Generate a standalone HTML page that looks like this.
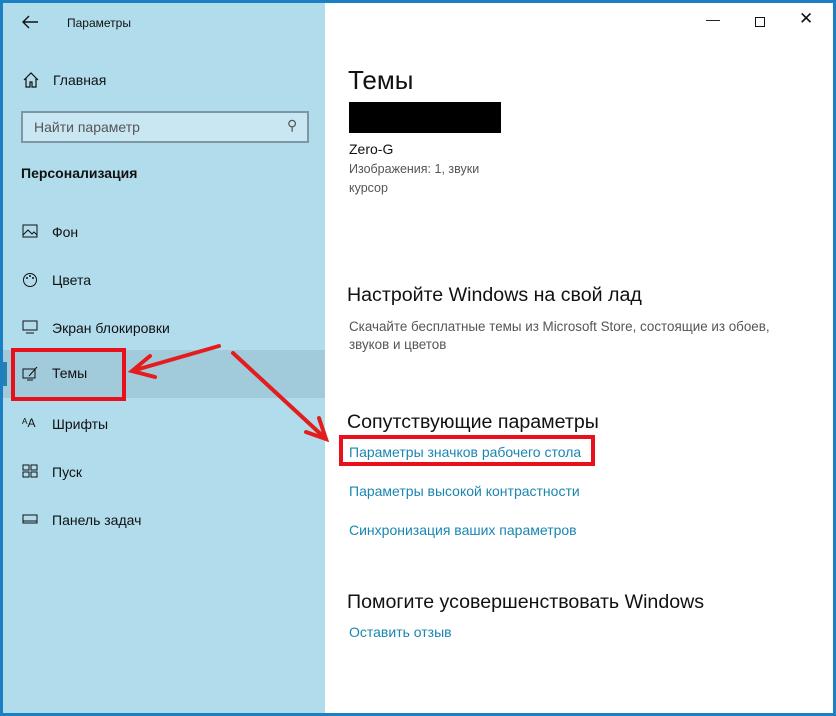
<!DOCTYPE html>
<html><head><meta charset="utf-8"><style>
*{margin:0;padding:0;box-sizing:border-box}
body{width:836px;height:716px;overflow:hidden;background:#1b7fc4;font-family:"Liberation Sans",sans-serif;position:relative}
.win{position:absolute;left:3px;top:3px;width:830px;height:710px;background:#fff}
.side{position:absolute;left:0;top:0;width:322px;height:710px;background:#b1dcec}
.t{position:absolute;white-space:nowrap}
.nav{position:absolute;left:0;width:322px;height:48px;font-size:14px;color:#111}
.nav span{position:absolute;left:49px;top:15px}
.nav svg{position:absolute;left:19px;top:15px}
a{color:#1a86b0;text-decoration:none}
</style></head><body>
<div class="win">
<div class="side">
<svg style="position:absolute;left:19px;top:12px" width="16" height="14"><path d="M7 1L1 7l6 6M1 7h15" stroke="#111" stroke-width="1.4" fill="none"/></svg>
<div class="t" style="left:64px;top:13px;font-size:12px;color:#111">Параметры</div>
<svg style="position:absolute;left:20px;top:69px" width="16" height="16"><path d="M1 8L8 1l7 7M3 6v9h4v-5h2v5h4V6" stroke="#111" stroke-width="1.2" fill="none"/></svg>
<div class="t" style="left:50px;top:69px;font-size:14px;color:#111">Главная</div>
<div style="position:absolute;left:18px;top:108px;width:288px;height:32px;border:2px solid #7d98a4;background:#c9e7f2"></div>
<div class="t" style="left:31px;top:116px;font-size:14px;color:#555">Найти параметр</div>
<div class="t" style="left:284px;top:114px;font-size:14px;color:#555">⚲</div>
<div class="t" style="left:18px;top:162px;font-size:14px;font-weight:bold;color:#111">Персонализация</div>
<div class="nav" style="top:206px"><svg width="16" height="14"><rect x="1" y="1" width="14" height="12" fill="none" stroke="#111"/><path d="M1 11l5-5 4 4 2-2 3 3" stroke="#111" fill="none"/></svg><span>Фон</span></div>
<div class="nav" style="top:254px"><svg width="16" height="16"><circle cx="8" cy="8" r="6.5" fill="none" stroke="#111"/><circle cx="5" cy="6" r="1" fill="#111"/><circle cx="8" cy="4" r="1" fill="#111"/><circle cx="11" cy="6" r="1" fill="#111"/></svg><span>Цвета</span></div>
<div class="nav" style="top:302px"><svg width="16" height="14"><rect x="1" y="1" width="14" height="9" fill="none" stroke="#111"/><path d="M4 13h8" stroke="#111"/></svg><span>Экран блокировки</span></div>
<div class="nav" style="top:347px;background:#a1cbdb"><div style="position:absolute;left:0;top:12px;width:4px;height:24px;background:#2a7fae"></div><svg width="16" height="16"><rect x="1" y="4" width="12" height="9" fill="none" stroke="#111"/><path d="M7 11l8-9M5 15h6" stroke="#111" fill="none"/></svg><span>Темы</span></div>
<div class="nav" style="top:398px"><span style="left:19px;font-size:12px">ᴬA</span><span>Шрифты</span></div>
<div class="nav" style="top:446px"><svg width="16" height="14"><rect x="1" y="1" width="6" height="5" fill="none" stroke="#111"/><rect x="9" y="1" width="6" height="5" fill="none" stroke="#111"/><rect x="1" y="8" width="6" height="5" fill="none" stroke="#111"/><rect x="9" y="8" width="6" height="5" fill="none" stroke="#111"/></svg><span>Пуск</span></div>
<div class="nav" style="top:494px"><svg width="16" height="14"><rect x="1" y="3" width="14" height="8" fill="none" stroke="#111"/><path d="M1 9h14" stroke="#111"/></svg><span>Панель задач</span></div>
</div>
<div class="t" style="left:703px;top:8px;font-size:14px;color:#111">—</div>
<div style="position:absolute;left:752px;top:14px;width:10px;height:10px;border:1px solid #111"></div>
<div class="t" style="left:796px;top:6px;font-size:17px;color:#111">✕</div>
<div class="t" style="left:345px;top:62px;font-size:26px;color:#111">Темы</div>
<div style="position:absolute;left:346px;top:99px;width:152px;height:31px;background:#000"></div>
<div class="t" style="left:346px;top:138px;font-size:14px;color:#111">Zero-G</div>
<div class="t" style="left:346px;top:157px;font-size:12.5px;color:#555;line-height:19px">Изображения: 1, звуки<br>курсор</div>
<div class="t" style="left:344px;top:281px;font-size:19.6px;color:#111">Настройте Windows на свой лад</div>
<div class="t" style="left:346px;top:315px;font-size:13.4px;color:#555;line-height:18px">Скачайте бесплатные темы из Microsoft Store, состоящие из обоев,<br>звуков и цветов</div>
<div class="t" style="left:344px;top:408px;font-size:19.6px;color:#111">Сопутствующие параметры</div>
<div class="t" style="left:346px;top:441px;font-size:14px"><a>Параметры значков рабочего стола</a></div>
<div class="t" style="left:346px;top:480px;font-size:14px"><a>Параметры высокой контрастности</a></div>
<div class="t" style="left:346px;top:519px;font-size:14px"><a>Синхронизация ваших параметров</a></div>
<div class="t" style="left:344px;top:588px;font-size:19.6px;color:#111">Помогите усовершенствовать Windows</div>
<div class="t" style="left:346px;top:621px;font-size:14px"><a>Оставить отзыв</a></div>
</div>
<div style="position:absolute;left:11px;top:348px;width:115px;height:53px;border:4px solid #e8101a"></div>
<div style="position:absolute;left:339px;top:435px;width:256px;height:31px;border:4px solid #e8101a"></div>
<svg style="position:absolute;left:0;top:0" width="836" height="716"><g stroke="#e31d1d" stroke-width="4" fill="none" stroke-linecap="round"><path d="M219 346L132 371M150 356L132 371L155 377"/><path d="M233 353L326 439M306 432L326 439L319 418"/></g></svg>
</body></html>
